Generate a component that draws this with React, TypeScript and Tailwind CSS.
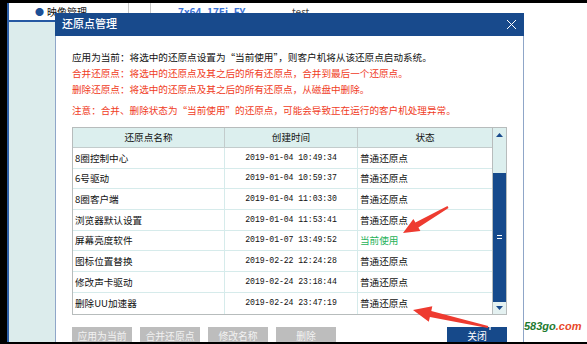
import React from "react";

const rows: { name: string; time: string; status: string; current?: boolean }[] = [
  { name: "8圈控制中心", time: "2019-01-04 10:49:34", status: "普通还原点" },
  { name: "6号驱动", time: "2019-01-04 10:59:37", status: "普通还原点" },
  { name: "8圈客户端", time: "2019-01-04 11:03:30", status: "普通还原点" },
  { name: "浏览器默认设置", time: "2019-01-04 11:53:41", status: "普通还原点" },
  { name: "屏幕亮度软件", time: "2019-01-07 13:49:52", status: "当前使用", current: true },
  { name: "图标位置替换", time: "2019-02-22 12:24:28", status: "普通还原点" },
  { name: "修改声卡驱动", time: "2019-02-24 23:18:44", status: "普通还原点" },
  { name: "删除UU加速器", time: "2019-02-24 23:47:19", status: "普通还原点" },
];

export default function App() {
  return (
    <div className="relative w-[587px] h-[344px] overflow-hidden bg-white flex flex-col font-['Noto_Sans_CJK_SC','Liberation_Sans',sans-serif] text-[#111]">
      <div className="h-[3px] bg-black shrink-0" />
      <div className="relative flex-1 flex overflow-hidden">
        <div className="w-[7px] bg-black" />
        <div className="w-[2px] bg-[#2d5fa8]" />
        {/* sidebar */}
        <div className="w-[119px] flex flex-col">
          <div className="h-[17px] bg-white flex items-center pl-[26px] gap-[3px] text-[10px]">
            <span className="text-[#1c4f96] text-[9px]">●</span>
            <span>映像管理</span>
          </div>
          <div className="h-[2px] bg-[#2659a3]" />
          <div className="flex-1 bg-[#dcecec]" />
        </div>
        {/* main */}
        <div className="flex-1 flex flex-col border-l border-[#c8c8c8]">
          <div className="h-[17px] flex text-[10px]">
            <div className="w-[22px] border-r border-[#c8c8c8]" />
            <div className="w-[141px] pl-[27px] flex items-center font-bold text-[#3b73d6]">7x64_17Ei_FY</div>
            <div className="flex items-center text-[#444]">test</div>
          </div>
        </div>

        {/* dialog */}
        <div className="absolute left-[55px] top-[10px] w-[469px] h-[345px] flex flex-col">
          <div className="h-[23px] bg-[#184a8c] flex items-center justify-between pl-[7px] pr-[7px] shrink-0">
            <span className="text-white text-[11px] leading-none pb-[3px] font-medium">还原点管理</span>
            <svg width="11" height="11" viewBox="0 0 11 11" className="mb-[1px]">
              <path d="M1 1 L10 10 M10 1 L1 10" stroke="white" strokeWidth="1" fill="none" />
            </svg>
          </div>
          <div className="flex-1 bg-white border-x border-[#8fa6c8] px-[16px] pt-[12.5px] flex flex-col">
            <div className="text-[9.6px] leading-[16px]">
              <div className="text-[#111] whitespace-nowrap">应用为当前：将选中的还原点设置为“当前使用”，则客户机将从该还原点启动系统。</div>
              <div className="text-[#f03c1e] whitespace-nowrap">合并还原点：将选中的还原点及其之后的所有还原点，合并到最后一个还原点。</div>
              <div className="text-[#f03c1e] whitespace-nowrap">删除还原点：将选中的还原点及其之后的所有还原点，从磁盘中删除。</div>
              <div className="text-[#f03c1e] whitespace-nowrap mt-[5.5px]">注意：合并、删除状态为“当前使用”的还原点，可能会导致正在运行的客户机处理异常。</div>
            </div>

            {/* table */}
            <div className="mt-[9px] border border-[#b7bcbc] flex">
              <div className="flex-1 flex flex-col border-r border-[#b7bcbc]">
                <div className="grid grid-cols-[152px_133px_1fr] h-[20px] bg-[#dcefee] border-b border-[#c3cccc] text-[9.6px]">
                  <div className="flex items-center justify-center border-r border-[#c3cccc]">还原点名称</div>
                  <div className="flex items-center justify-center border-r border-[#c3cccc]">创建时间</div>
                  <div className="flex items-center justify-center">状态</div>
                </div>
                {rows.map((r, i) => (
                  <div
                    key={i}
                    className={`grid grid-cols-[152px_133px_1fr] h-[20.7px] text-[9.6px] ${i < rows.length - 1 ? "border-b border-[#d6ebeb]" : ""}`}
                  >
                    <div className="flex items-center pl-[2px] border-r border-[#d6ebeb] whitespace-nowrap">{r.name}</div>
                    <div className="flex items-center justify-center border-r border-[#d6ebeb] font-['Liberation_Mono',monospace] text-[8.2px] tracking-[-0.1px]">
                      {r.time}
                    </div>
                    <div className={`flex items-center pl-[2px] whitespace-nowrap ${r.current ? "text-[#1fb25a]" : ""}`}>{r.status}</div>
                  </div>
                ))}
              </div>
              {/* scrollbar */}
              <div className="w-[13px] flex flex-col">
                <div className="h-[45px] bg-[#dcefee] flex justify-center pt-[5px]">
                  <svg width="7" height="4" viewBox="0 0 7 4">
                    <path d="M3.5 0 L7 4 L0 4 Z" fill="#184a8c" />
                  </svg>
                </div>
                <div className="flex-1 bg-[#164a8c] flex flex-col items-center justify-center gap-[2px]">
                  <div className="w-[5px] h-[1px] bg-white" />
                  <div className="w-[5px] h-[1px] bg-white" />
                </div>
                <div className="h-[12px] bg-[#e4f1f1] flex justify-center items-center">
                  <svg width="7" height="4" viewBox="0 0 7 4">
                    <path d="M0 0 L7 0 L3.5 4 Z" fill="#184a8c" />
                  </svg>
                </div>
              </div>
            </div>

            {/* buttons */}
            <div className="mt-[12px] flex">
              <div className="flex gap-[8px]">
                {["应用为当前", "合并还原点", "修改名称", "删除"].map((b) => (
                  <div key={b} className="w-[60px] h-[20px] bg-[#bdbdbd] text-[#f2f2f2] text-[9.8px] flex items-center justify-center">
                    {b}
                  </div>
                ))}
              </div>
              <div className="ml-auto w-[60px] h-[20px] bg-[#16498a] text-white text-[9.8px] flex items-center justify-center">关闭</div>
            </div>
          </div>
        </div>
      </div>
      <div className="h-[2px] bg-black shrink-0" />

      {/* annotations */}
      <svg className="absolute left-0 top-0" width="587" height="344" viewBox="0 0 587 344">
        <polygon
          points="448.5,207.9 418.4,227.6 420.4,231.1 403,233 413.4,218.9 415.4,222.4 447.5,206.1"
          fill="#ee3b30"
        />
        <polygon
          points="488.2,326 431.3,311.1 432.3,306.2 413,310 428.8,321.8 429.9,316.9 487.8,328"
          fill="#ee3b30"
        />
        <path d="M502 320.5 A 9 9 0 0 0 490 330" stroke="white" strokeWidth="1.4" fill="none" opacity="0.9" />
      </svg>
      <div className="absolute left-[524px] top-[321px] text-[11px] italic font-bold font-['Liberation_Sans',sans-serif] leading-none">
        <span className="text-[#1e7a30]">583go</span>
        <span className="text-[#e8482a]">.com</span>
      </div>
    </div>
  );
}
